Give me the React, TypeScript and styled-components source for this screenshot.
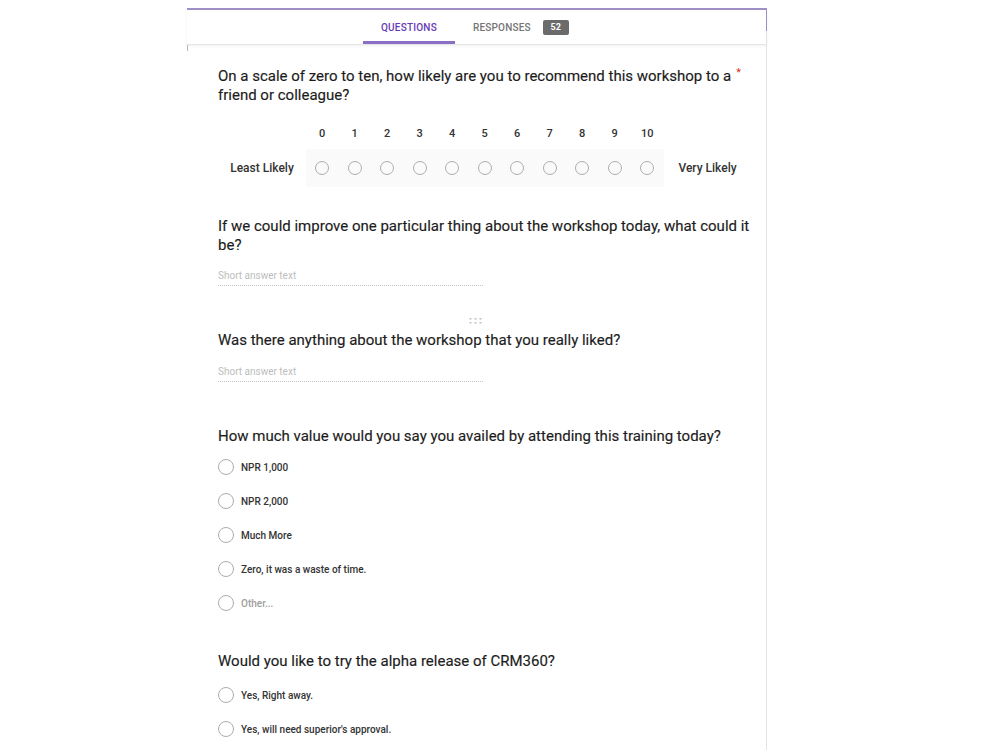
import React from "react";
import styled, { createGlobalStyle } from "styled-components";

const GlobalStyle = createGlobalStyle`
  html, body {
    margin: 0;
    padding: 0;
    background: #fff;
  }
  body {
    font-family: Roboto, "Liberation Sans", Arial, sans-serif;
    color: #202124;
  }
`;

const scale = Array.from({ length: 11 }, (_, i) => i);

const valueOptions = [
  "NPR 1,000",
  "NPR 2,000",
  "Much More",
  "Zero, it was a waste of time.",
];

const alphaOptions = ["Yes, Right away.", "Yes, will need superior's approval."];

const App: React.FC = () => {
  return (
    <>
      <GlobalStyle />
      <StyledFrame>
        <StyledHeader>
          <StyledTab active>QUESTIONS</StyledTab>
          <StyledTab>
            RESPONSES
            <StyledBadge>52</StyledBadge>
          </StyledTab>
        </StyledHeader>

        <StyledContent>
          <StyledSection>
            <StyledTitle>
              On a scale of zero to ten, how likely are you to recommend this workshop to a
              <StyledRequired>*</StyledRequired> friend or colleague?
            </StyledTitle>
            <StyledScaleNumbers>
              <StyledScaleLabel />
              {scale.map((n) => (
                <StyledScaleCell key={n}>{n}</StyledScaleCell>
              ))}
            </StyledScaleNumbers>
            <StyledScaleRow>
              <StyledScaleLabel>Least Likely</StyledScaleLabel>
              <StyledScaleBand>
                {scale.map((n) => (
                  <StyledScaleCell key={n}>
                    <StyledRadio size={14} />
                  </StyledScaleCell>
                ))}
              </StyledScaleBand>
              <StyledScaleLabel>Very Likely</StyledScaleLabel>
            </StyledScaleRow>
          </StyledSection>

          <StyledSection gap={30}>
            <StyledTitle>
              If we could improve one particular thing about the workshop today, what could it be?
            </StyledTitle>
            <StyledShortAnswer>Short answer text</StyledShortAnswer>
          </StyledSection>

          <StyledSection gap={31}>
            <StyledDragHandle>
              <svg width="13" height="6" viewBox="0 0 13 6">
                {[1.5, 6.5, 11.5].map((x) =>
                  [1, 5].map((y) => (
                    <rect key={`${x}-${y}`} x={x - 1} y={y - 1} width="2" height="1.6" fill="#c4c4c4" />
                  ))
                )}
              </svg>
            </StyledDragHandle>
            <StyledTitle gap={6}>Was there anything about the workshop that you really liked?</StyledTitle>
            <StyledShortAnswer gap={16}>Short answer text</StyledShortAnswer>
          </StyledSection>

          <StyledSection gap={45}>
            <StyledTitle>How much value would you say you availed by attending this training today?</StyledTitle>
            <StyledOptions gap={4}>
              {valueOptions.map((o) => (
                <StyledOption key={o}>
                  <StyledRadio size={16} />
                  <StyledOptionLabel>{o}</StyledOptionLabel>
                </StyledOption>
              ))}
              <StyledOption>
                <StyledRadio size={16} />
                <StyledOptionLabel muted>Other...</StyledOptionLabel>
              </StyledOption>
            </StyledOptions>
          </StyledSection>

          <StyledSection gap={32}>
            <StyledTitle>Would you like to try the alpha release of CRM360?</StyledTitle>
            <StyledOptions gap={7}>
              {alphaOptions.map((o) => (
                <StyledOption key={o}>
                  <StyledRadio size={16} />
                  <StyledOptionLabel>{o}</StyledOptionLabel>
                </StyledOption>
              ))}
            </StyledOptions>
          </StyledSection>
        </StyledContent>
      </StyledFrame>
    </>
  );
};

const StyledFrame = styled.div`
  box-sizing: border-box;
  margin: 8px 0 0 187px;
  width: 580px;
  min-height: 742px;
  border-right: 1px solid #e4e4e4;
`;

const StyledHeader = styled.div`
  position: relative;
  display: flex;
  height: 34px;
  margin-right: -1px;
  padding-left: 176px;
  border-style: solid;
  border-width: 2px 1px 0 0;
  border-image: linear-gradient(to bottom, #9e8fc9 22px, transparent 22px) 1;
  box-shadow: 0 1px 0 #e6e6e6, 0 2px 3px rgba(0, 0, 0, 0.06);

  /* small edge mark under the left end of the bar */
  &::after {
    content: "";
    position: absolute;
    left: 0;
    top: 35px;
    width: 1px;
    height: 6px;
    background: #b8b8b8;
  }
`;

const StyledTab = styled.div<{ active?: boolean }>`
  display: flex;
  align-items: center;
  padding: 3px 18px 0;
  height: 28px;
  font-size: 10px;
  font-weight: 500;
  letter-spacing: 0.2px;
  color: ${(p) => (p.active ? "#673ab7" : "#757575")};
  border-bottom: 3px solid ${(p) => (p.active ? "#8a6fc7" : "transparent")};
`;

const StyledBadge = styled.span`
  display: inline-flex;
  align-items: center;
  justify-content: center;
  margin-left: 12px;
  width: 26px;
  height: 15px;
  border-radius: 2px;
  background: #6b6b6b;
  color: #fff;
  font-size: 9px;
  font-weight: 700;
`;

const StyledContent = styled.div`
  padding: 23px 14px 0 31px;
`;

const StyledSection = styled.div<{ gap?: number }>`
  margin-top: ${(p) => p.gap ?? 0}px;
`;

const StyledTitle = styled.div<{ gap?: number }>`
  margin-top: ${(p) => p.gap ?? 0}px;
  font-size: 15px;
  line-height: 19px;
  color: #1c1c1c;
  -webkit-text-stroke: 0.15px #1c1c1c;
`;

const StyledRequired = styled.span`
  color: #d93025;
  font-size: 11px;
  vertical-align: top;
  margin-left: 5px;
  line-height: 12px;
  -webkit-text-stroke: 0;
`;

const StyledScaleNumbers = styled.div`
  display: flex;
  margin-top: 20px;
  height: 16px;
  font-size: 11px;
  font-weight: 500;
  color: #333;
`;

const StyledScaleRow = styled.div`
  display: flex;
  margin-top: 8px;
  height: 38px;
`;

const StyledScaleLabel = styled.div`
  display: flex;
  align-items: center;
  justify-content: center;
  width: 88px;
  font-size: 12px;
  font-weight: 500;
  color: #333;
`;

const StyledScaleBand = styled.div`
  display: flex;
  background: #fafafa;
`;

const StyledScaleCell = styled.div`
  display: flex;
  align-items: center;
  justify-content: center;
  width: 32.5px;
`;

const StyledRadio = styled.span<{ size: number }>`
  box-sizing: border-box;
  flex: none;
  width: ${(p) => p.size}px;
  height: ${(p) => p.size}px;
  border-radius: 50%;
  border: 1.5px solid #adadad;
`;

const StyledShortAnswer = styled.div<{ gap?: number }>`
  margin-top: ${(p) => p.gap ?? 15}px;
  width: 265px;
  padding-bottom: 3px;
  font-size: 10px;
  line-height: 12px;
  color: #bdbdbd;
  border-bottom: 1px dotted #c6c6c6;
`;

const StyledDragHandle = styled.div`
  display: flex;
  justify-content: center;
  align-items: center;
  height: 8px;
  padding-right: 20px;
`;

const StyledOptions = styled.div<{ gap?: number }>`
  margin-top: ${(p) => p.gap ?? 0}px;
`;

const StyledOption = styled.div`
  display: flex;
  align-items: center;
  height: 34px;
`;

const StyledOptionLabel = styled.span<{ muted?: boolean }>`
  margin-left: 7px;
  font-size: 10px;
  font-weight: 500;
  color: ${(p) => (p.muted ? "#9e9e9e" : "#333")};
`;

export default App;
